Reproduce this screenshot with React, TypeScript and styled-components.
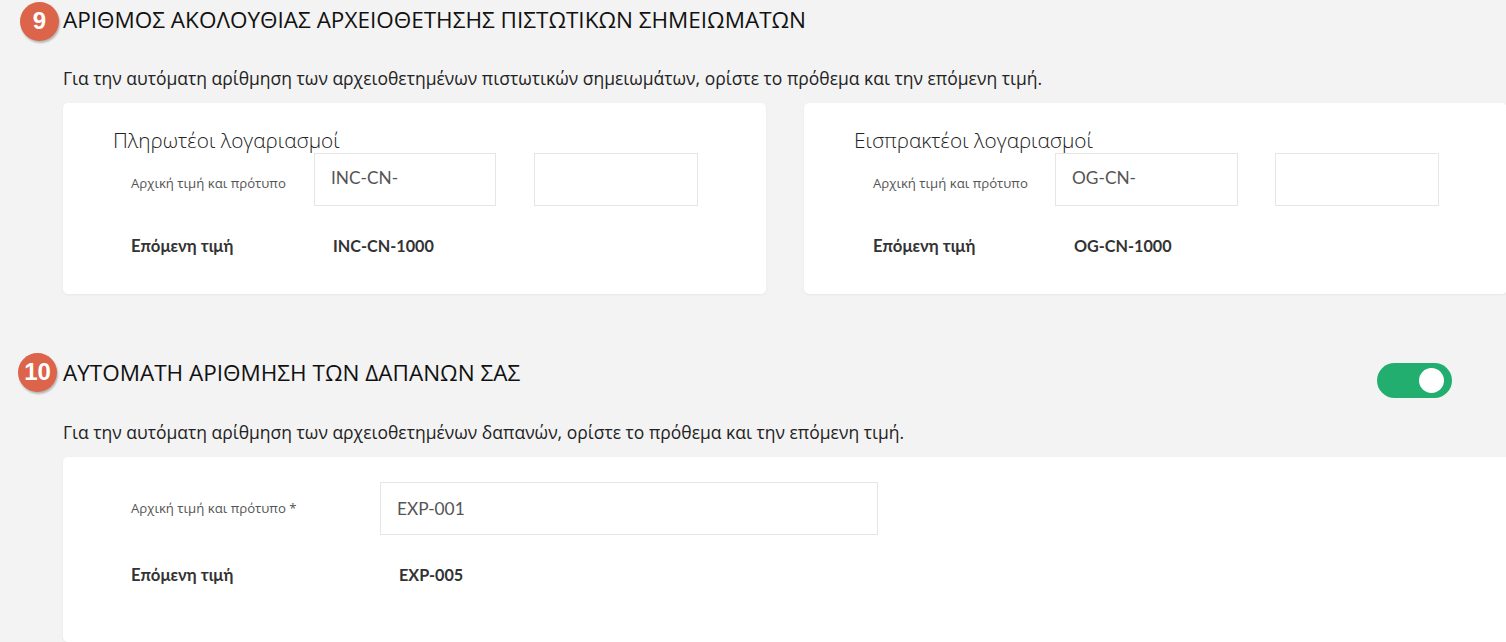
import styled, { createGlobalStyle } from 'styled-components';

const GlobalStyle = createGlobalStyle`
  html, body {
    margin: 0;
    padding: 0;
    background: #f3f3f3;
    overflow: hidden;
  }
  body {
    font-family: 'Open Sans', 'Noto Sans', sans-serif;
    color: #222;
  }
`;

const Page = styled.div`
  width: 1506px;
  height: 642px;
  overflow: hidden;
  padding-left: 63px;
  box-sizing: border-box;
`;

const Section = styled.section<{ $top: number }>`
  position: relative;
  margin-top: ${({ $top }) => $top}px;
`;

const Badge = styled.div<{ $left: number; $top: number }>`
  position: absolute;
  left: ${({ $left }) => $left}px;
  top: ${({ $top }) => $top}px;
  width: 39px;
  height: 39px;
  border-radius: 50%;
  background: #dc644a;
  box-shadow: 1px 2px 2px rgba(0, 0, 0, 0.25);
  color: #fff;
  font-family: 'Liberation Sans', Arial, sans-serif;
  font-size: 24px;
  font-weight: 700;
  line-height: 38px;
  text-align: center;
`;

const HeadingRow = styled.div<{ $height: number }>`
  display: flex;
  align-items: center;
  justify-content: space-between;
  height: ${({ $height }) => $height}px;
`;

const Heading = styled.h2`
  margin: 0 0 2px;
  font-size: 22.5px;
  font-weight: 400;
  color: #111;
  white-space: nowrap;
`;

const Toggle = styled.div`
  align-self: flex-start;
  width: 75px;
  height: 35px;
  margin: 10px 54px 0 0;
  border-radius: 18px;
  background: #22ae6f;
  display: flex;
  align-items: center;
  justify-content: flex-end;
  padding-right: 8px;
  box-sizing: border-box;
`;

const Knob = styled.span`
  width: 25px;
  height: 25px;
  border-radius: 50%;
  background: #fff;
`;

const Intro = styled.p<{ $top: number }>`
  margin: ${({ $top }) => $top}px 0 0;
  font-size: 17.5px;
  line-height: 22px;
  color: #222;
  white-space: nowrap;
`;

const CardRow = styled.div`
  display: grid;
  grid-template-columns: 703px 703px;
  column-gap: 38px;
  margin-top: 14px;
`;

const Card = styled.div`
  height: 191px;
  background: #fff;
  border-radius: 5px;
  box-shadow: 0 1px 3px rgba(0, 0, 0, 0.05);
  padding: 24px 0 0 50px;
  box-sizing: border-box;
`;

const CardTitle = styled.div`
  font-size: 20.8px;
  font-weight: 300;
  line-height: 26px;
  height: 26px;
  color: #222;
  white-space: nowrap;
`;

const FieldRow = styled.div<{ $left: number }>`
  display: flex;
  align-items: center;
  margin-left: ${({ $left }) => $left}px;
`;

const FieldLabel = styled.label<{ $width: number; $shift: number }>`
  width: ${({ $width }) => $width}px;
  margin-top: ${({ $shift }) => $shift}px;
  font-size: 13.2px;
  color: #555;
  white-space: nowrap;
`;

const Input = styled.div<{ $width: number; $gap?: number; $lineHeight: number }>`
  width: ${({ $width }) => $width}px;
  height: 53px;
  margin-left: ${({ $gap }) => $gap ?? 0}px;
  border: 1px solid #e6e6e6;
  background: #fff;
  box-sizing: border-box;
  padding: 0 16px;
  font-family: Lato, 'Noto Sans', sans-serif;
  font-size: 17.3px;
  line-height: ${({ $lineHeight }) => $lineHeight}px;
  color: #555;
`;

const ValueRow = styled.div<{ $left: number }>`
  display: flex;
  margin: 29px 0 0 ${({ $left }) => $left}px;
  font-family: Lato, 'Open Sans', sans-serif;
  font-size: 16.2px;
  font-weight: 700;
  line-height: 22px;
  color: #333;
`;

const ValueLabel = styled.span<{ $width: number }>`
  width: ${({ $width }) => $width}px;
  font-size: 16.7px;
`;

const WideCard = styled(Card)`
  height: 185px;
  padding: 25px 0 0 50px;
  margin-top: 14px;
  margin-right: -63px;
  border-radius: 5px 0 0 5px;
`;

type SplitCardProps = {
  title: string;
  prefix: string;
  next: string;
  inset: number;
  labelWidth: number;
  inputWidth: number;
  gap: number;
  valueOffset: number;
};

function SplitCard({ title, prefix, next, inset, labelWidth, inputWidth, gap, valueOffset }: SplitCardProps) {
  return (
    <Card>
      <CardTitle>{title}</CardTitle>
      <FieldRow $left={inset}>
        <FieldLabel $width={labelWidth} $shift={6}>Αρχική τιμή και πρότυπο</FieldLabel>
        <Input $width={inputWidth} $lineHeight={47}>{prefix}</Input>
        <Input $width={164} $gap={gap} $lineHeight={47} />
      </FieldRow>
      <ValueRow $left={inset}>
        <ValueLabel $width={valueOffset}>Επόμενη τιμή</ValueLabel>
        <span>{next}</span>
      </ValueRow>
    </Card>
  );
}

export default function App() {
  return (
    <Page>
      <GlobalStyle />
      <Section $top={0}>
        <Badge $left={-43} $top={2}>9</Badge>
        <HeadingRow $height={41}>
          <Heading>ΑΡΙΘΜΟΣ ΑΚΟΛΟΥΘΙΑΣ ΑΡΧΕΙΟΘΕΤΗΣΗΣ ΠΙΣΤΩΤΙΚΩΝ ΣΗΜΕΙΩΜΑΤΩΝ</Heading>
        </HeadingRow>
        <Intro $top={26}>Για την αυτόματη αρίθμηση των αρχειοθετημένων πιστωτικών σημειωμάτων, ορίστε το πρόθεμα και την επόμενη τιμή.</Intro>
        <CardRow>
          <SplitCard title="Πληρωτέοι λογαριασμοί" prefix="INC-CN-" next="INC-CN-1000" inset={18} labelWidth={183} inputWidth={182} gap={38} valueOffset={202} />
          <SplitCard title="Εισπρακτέοι λογαριασμοί" prefix="OG-CN-" next="OG-CN-1000" inset={19} labelWidth={182} inputWidth={183} gap={37} valueOffset={201} />
        </CardRow>
      </Section>
      <Section $top={59}>
        <Badge $left={-45} $top={0}>10</Badge>
        <HeadingRow $height={40}>
          <Heading>ΑΥΤΟΜΑΤΗ ΑΡΙΘΜΗΣΗ ΤΩΝ ΔΑΠΑΝΩΝ ΣΑΣ</Heading>
          <Toggle><Knob /></Toggle>
        </HeadingRow>
        <Intro $top={28}>Για την αυτόματη αρίθμηση των αρχειοθετημένων δαπανών, ορίστε το πρόθεμα και την επόμενη τιμή.</Intro>
        <WideCard>
          <FieldRow $left={18}>
            <FieldLabel $width={249} $shift={-2}>Αρχική τιμή και πρότυπο *</FieldLabel>
            <Input $width={498} $lineHeight={51}>EXP-001</Input>
          </FieldRow>
          <ValueRow $left={18}>
            <ValueLabel $width={268}>Επόμενη τιμή</ValueLabel>
            <span>EXP-005</span>
          </ValueRow>
        </WideCard>
      </Section>
    </Page>
  );
}
